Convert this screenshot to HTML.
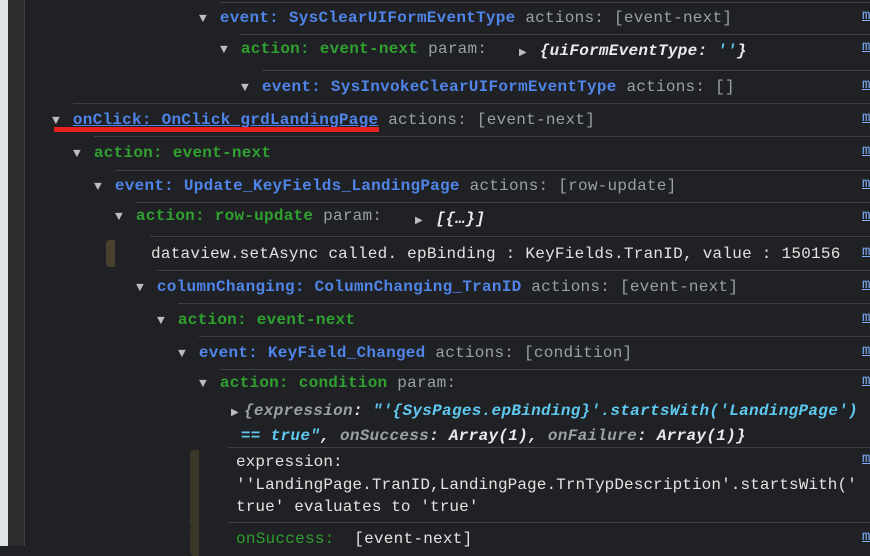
<!DOCTYPE html>
<html><head><meta charset="utf-8"><style>
body{margin:0;width:870px;height:546px;overflow:hidden;background:#202124;position:relative;font-family:"Liberation Mono",monospace;font-size:16px;letter-spacing:0.25px}
.l{position:absolute;white-space:pre;line-height:20px}
.b{color:#4f84e8;font-weight:bold}
.g{color:#30a030;font-weight:bold}
.gr{color:#9aa0a6}
.w{color:#e3e3e3}
.t{color:#bdbdbd;font-size:13px;margin-right:3px}
.s{position:absolute;height:1px;background:#3c4043;right:0}
.m{position:absolute;left:862px;color:#7cacf8;text-decoration:underline;font-size:14px}
.k{color:#9aa0a6;font-style:italic}
.c{color:#5ec8f0;font-style:italic;font-weight:bold}
.o{color:#e8eaed;font-style:italic;font-weight:bold}
</style></head><body>
<div style="position:absolute;left:0;top:0;width:8px;height:546px;background:#dfe4e8"></div>
<div style="position:absolute;left:8px;top:0;width:16px;height:546px;background:#2b2c2e"></div>
<div style="position:absolute;left:24px;top:0;width:1px;height:546px;background:#3c4043"></div>

<div class="s" style="left:220px;top:2px"></div>
<div class="l" style="left:199px;top:8px"><span class="t">▼</span> <span class="b">event: SysClearUIFormEventType</span> <span class="gr">actions: [event-next]</span></div>
<div class="s" style="left:240px;top:34px"></div>
<div class="l" style="left:220px;top:39px"><span class="t">▼</span> <span class="g">action: event-next</span> <span class="gr">param:</span></div>
<div class="l" style="left:519px;top:41px"><span class="t" style="font-size:10px">▶</span> <span class="o">{uiFormEventType: <span class="c">''</span>}</span></div>
<div class="s" style="left:262px;top:70px"></div>
<div class="l" style="left:241px;top:77px"><span class="t">▼</span> <span class="b">event: SysInvokeClearUIFormEventType</span> <span class="gr">actions: []</span></div>
<div class="s" style="left:73px;top:103px"></div>
<div class="l" style="left:52px;top:110px"><span class="t">▼</span> <span class="b" style="text-decoration:underline">onClick: OnClick_grdLandingPage</span> <span class="gr">actions: [event-next]</span></div>
<div style="position:absolute;left:54px;top:127px;width:325px;height:5px;background:#e8201f"></div>
<div class="s" style="left:94px;top:136px"></div>
<div class="l" style="left:73px;top:143px"><span class="t">▼</span> <span class="g">action: event-next</span></div>
<div class="s" style="left:115px;top:170px"></div>
<div class="l" style="left:94px;top:176px"><span class="t">▼</span> <span class="b">event: Update_KeyFields_LandingPage</span> <span class="gr">actions: [row-update]</span></div>
<div class="s" style="left:136px;top:202px"></div>
<div class="l" style="left:115px;top:206px"><span class="t">▼</span> <span class="g">action: row-update</span> <span class="gr">param:</span></div>
<div class="l" style="left:415px;top:209px"><span class="t" style="font-size:10px">▶</span> <span class="o">[{…}]</span></div>
<div class="s" style="left:150px;top:236px"></div>
<div style="position:absolute;left:106px;top:240px;width:9px;height:27px;background:#4a4030;border-radius:4px 0 0 4px"></div>
<div class="l w" style="left:151px;top:244px">dataview.setAsync called. epBinding : KeyFields.TranID, value : 150156</div>
<div class="s" style="left:157px;top:270px"></div>
<div class="l" style="left:136px;top:277px"><span class="t">▼</span> <span class="b">columnChanging: ColumnChanging_TranID</span> <span class="gr">actions: [event-next]</span></div>
<div class="s" style="left:178px;top:303px"></div>
<div class="l" style="left:157px;top:310px"><span class="t">▼</span> <span class="g">action: event-next</span></div>
<div class="s" style="left:199px;top:336px"></div>
<div class="l" style="left:178px;top:343px"><span class="t">▼</span> <span class="b">event: KeyField_Changed</span> <span class="gr">actions: [condition]</span></div>
<div class="s" style="left:220px;top:369px"></div>
<div class="l" style="left:199px;top:373px"><span class="t">▼</span> <span class="g">action: condition</span> <span class="gr">param:</span></div>
<div class="l" style="left:231px;top:400px;line-height:22px;letter-spacing:0.3px"><span class="t" style="font-size:10px;margin-right:5px">▶</span><span class="o"><span class="k">{expression</span>: <span class="c">"'{SysPages.epBinding}'.startsWith('LandingPage')</span></span>
 <span class="o"><span class="c">== true"</span>, <span class="k">onSuccess</span>: Array(1), <span class="k">onFailure</span>: Array(1)}</span></div>
<div class="s" style="left:228px;top:447px"></div>
<div style="position:absolute;left:190px;top:450px;width:9px;height:78px;background:#3a3628;border-radius:4px 0 0 4px"></div>
<div class="l w" style="left:236px;top:451px;line-height:22.5px;letter-spacing:0.1px">expression:
''LandingPage.TranID,LandingPage.TrnTypDescription'.startsWith('
true' evaluates to 'true'</div>
<div class="s" style="left:228px;top:522px"></div>
<div style="position:absolute;left:190px;top:526px;width:9px;height:30px;background:#3a3628;border-radius:4px 0 0 4px"></div>
<div class="l" style="left:236px;top:529px"><span style="color:#2ea02e">onSuccess:</span> <span class="w"> [event-next]</span></div>

<div class="m" style="top:8px">m</div>
<div class="m" style="top:39px">m</div>
<div class="m" style="top:77px">m</div>
<div class="m" style="top:110px">m</div>
<div class="m" style="top:143px">m</div>
<div class="m" style="top:176px">m</div>
<div class="m" style="top:208px">m</div>
<div class="m" style="top:244px">m</div>
<div class="m" style="top:277px">m</div>
<div class="m" style="top:310px">m</div>
<div class="m" style="top:343px">m</div>
<div class="m" style="top:373px">m</div>
<div class="m" style="top:451px">m</div>
<div class="m" style="top:529px">m</div>
</body></html>
